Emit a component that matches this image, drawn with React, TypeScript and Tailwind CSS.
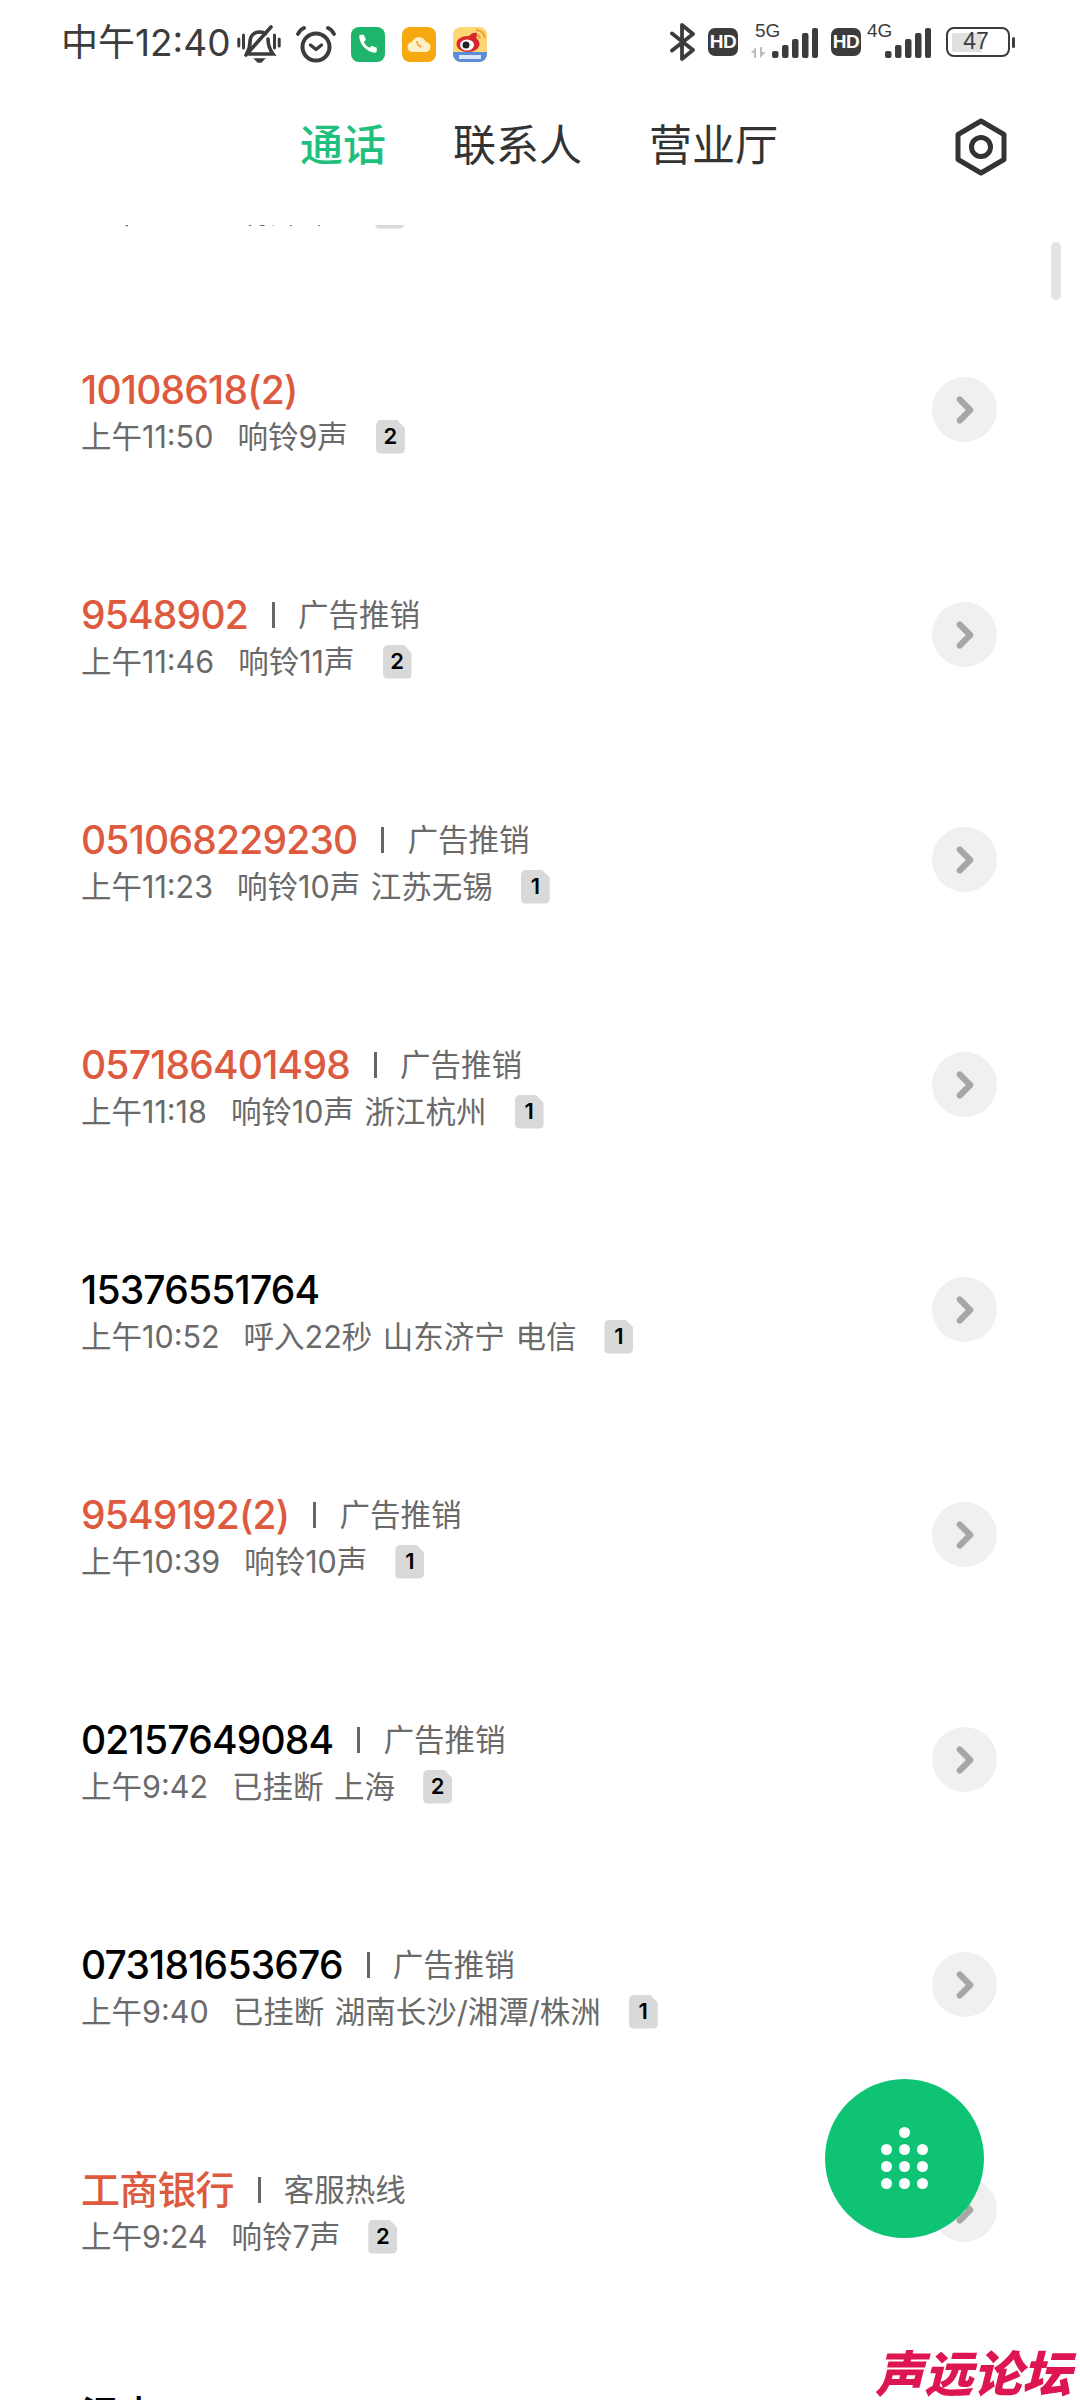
import React from "react";
import { ChevronRight } from "lucide-react";

type Call = {
  name: string;
  missed?: boolean;
  tag?: string;
  time: string;
  info: string;
  sim: string;
};

const calls: Call[] = [
  { name: "10108618(2)", missed: true, time: "上午11:50", info: "响铃9声", sim: "2" },
  { name: "9548902", missed: true, tag: "广告推销", time: "上午11:46", info: "响铃11声", sim: "2" },
  { name: "051068229230", missed: true, tag: "广告推销", time: "上午11:23", info: "响铃10声 江苏无锡", sim: "1" },
  { name: "057186401498", missed: true, tag: "广告推销", time: "上午11:18", info: "响铃10声 浙江杭州", sim: "1" },
  { name: "15376551764", time: "上午10:52", info: "呼入22秒 山东济宁 电信", sim: "1" },
  { name: "9549192(2)", missed: true, tag: "广告推销", time: "上午10:39", info: "响铃10声", sim: "1" },
  { name: "02157649084", tag: "广告推销", time: "上午9:42", info: "已挂断 上海", sim: "2" },
  { name: "073181653676", tag: "广告推销", time: "上午9:40", info: "已挂断 湖南长沙/湘潭/株洲", sim: "1" },
  { name: "工商银行", missed: true, tag: "客服热线", time: "上午9:24", info: "响铃7声", sim: "2" },
];

const dots = [0, 1, 0, 1, 1, 1, 1, 1, 1, 1, 1, 1];

const Signal = () => (
  <svg width="46" height="30" viewBox="0 0 46 30" fill="#3c3c3c">
    <rect x="0" y="23" width="6.500" height="7" rx="2" />
    <rect x="10" y="17" width="6.500" height="13" rx="2" />
    <rect x="20" y="11" width="6.500" height="19" rx="2" />
    <rect x="30" y="5" width="6.500" height="25" rx="2" />
    <rect x="40" y="0" width="6" height="30" rx="2" />
  </svg>
);

const HdBadge = () => (
  <span className="flex h-[28px] w-[30px] items-center justify-center rounded-[7px] bg-[#3c3c3c] font-['Liberation_Sans',sans-serif] text-[19px] font-bold tracking-[-0.5px] text-white">
    HD
  </span>
);

const StatusBar = () => (
  <div className="flex h-[70px] items-start justify-between pt-[24px] pl-[61px] pr-[65px] text-[#3c3c3c]">
    <div className="flex items-center">
      <span className="mt-[-2px] w-[166px] whitespace-nowrap text-[37px] leading-[38px]">中午12:40</span>
      <svg className="ml-[10px]" width="44" height="40" viewBox="0 0 44 40" fill="none" stroke="#3c3c3c" strokeWidth="3.600" strokeLinecap="round">
        <path d="M10 29c2-3 3-6 3-11 0-6 4-10 10-10 2 0 4 .5 5.500 1.500" />
        <path d="M31 15c0 7 2 11 5 15H12" />
        <path d="M9 31 34 3" />
        <path d="M1.800 15v7M6.500 11v13M37.500 11v13M42.200 15v7" strokeWidth="3" />
        <path d="M18 35h9l-3 3h-3z" fill="#3c3c3c" strokeWidth="1.500" />
      </svg>
      <svg className="ml-[15px]" width="40" height="38" viewBox="0 0 40 38" fill="none" stroke="#3c3c3c" strokeLinecap="round" strokeLinejoin="round">
        <circle cx="20" cy="22" r="13.500" strokeWidth="4" />
        <path d="M14.500 20 20 24.500l5.500-4.500" strokeWidth="3.400" />
        <path d="M2 9c1-2 3-5 6-6M38 9c-1-2-3-5-6-6" strokeWidth="3.800" />
      </svg>
      <span className="ml-[15px] flex h-[35px] w-[34px] items-center justify-center rounded-[8px] bg-[#1fb46b]">
        <svg width="20" height="20" viewBox="0 0 24 24" fill="#fff">
          <path d="M3 1h4l2.500 6-2.500 2.500c1.500 3 4 5.500 7 7l2.500-2.500 6 2.500v4c0 1-.8 2-2 2C11 22 2 13 1.500 3 1.500 2 2 1 3 1z" />
        </svg>
      </span>
      <span className="ml-[17px] flex h-[35px] w-[34px] items-center justify-center rounded-[8px] bg-[#f6a90f]">
        <svg width="24" height="18" viewBox="0 0 24 18" fill="#fff0c8">
          <path d="M6 17a5 5 0 0 1-1-10 7.500 7.500 0 0 1 14 0 5 5 0 0 1-1 10z" />
          <path d="M10 6c0 3 2 5 4 6" stroke="#e8a030" strokeWidth="1.500" fill="none" />
        </svg>
      </span>
      <span className="ml-[17px] block h-[35px] w-[34px] overflow-hidden rounded-[8px] bg-[#fbd873]">
        <svg width="34" height="35" viewBox="0 0 34 35">
          <rect y="25" width="34" height="10" fill="#5b8bdc" />
          <path d="M23 3a9 9 0 0 1 9 8" stroke="#f29a3a" strokeWidth="2" fill="none" />
          <path d="M23 8a4.500 4.500 0 0 1 4 4" stroke="#f29a3a" strokeWidth="2" fill="none" />
          <ellipse cx="15" cy="17" rx="11.500" ry="8" fill="#d9272e" />
          <path d="M15 10c3-4 6-5 9-4l-1 9z" fill="#d9272e" />
          <ellipse cx="14" cy="18" rx="7" ry="5.500" fill="#fff" />
          <circle cx="13" cy="18" r="3.500" fill="#222" />
          <rect x="6" y="28" width="22" height="4" fill="#fff" opacity=".8" />
        </svg>
      </span>
    </div>
    <div className="mt-[-1px] flex items-center">
      <svg width="25" height="38" viewBox="0 0 25 38" fill="none" stroke="#3c3c3c" strokeWidth="3.800" strokeLinejoin="round" strokeLinecap="round">
        <path d="M2 10.500 23 27 12 36V2l11 9L2 27.500" />
      </svg>
      <span className="ml-[13px]"><HdBadge /></span>
      <div className="relative ml-[10px] h-[38px] w-[70px]">
        <span className="absolute left-[7px] top-[-3px] font-['Liberation_Sans',sans-serif] text-[19px] leading-[22px]">5G</span>
        <svg className="absolute left-[3px] bottom-[3px]" width="16" height="11" viewBox="0 0 16 11" fill="#bdbdbd">
          <path d="M5 0v11H3V6H0zM9 11V0h2v5h4z" />
        </svg>
        <span className="absolute right-0 top-[5px]"><Signal /></span>
      </div>
      <span className="ml-[13px]"><HdBadge /></span>
      <div className="relative ml-[6px] h-[38px] w-[64px]">
        <span className="absolute left-0 top-[-3px] font-['Liberation_Sans',sans-serif] text-[19px] leading-[22px]">4G</span>
        <span className="absolute right-0 top-[5px]"><Signal /></span>
      </div>
      <div className="ml-[15px] flex items-center">
        <div className="relative flex h-[30px] w-[64px] items-center rounded-[8px] border-[2.500px] border-[#3c3c3c] pl-[4px]">
          <span className="h-[19px] w-[30px] rounded-[2px] bg-[#e0e0e0]" />
          <span className="absolute inset-0 pr-[4px] text-center font-['Liberation_Sans',sans-serif] text-[23px] leading-[25px]">47</span>
        </div>
        <span className="ml-[2px] h-[11px] w-[3px] rounded-[2px] bg-[#3c3c3c]" />
      </div>
    </div>
  </div>
);

const TopTabs = () => (
  <div className="relative flex h-[155px] items-start pl-[300px] pt-[52px] text-[#333333]">
    <span className="text-[43px] font-medium leading-[46px] text-[#1fbf7e]">通话</span>
    <span className="ml-[67px] text-[43px] leading-[46px]">联系人</span>
    <span className="ml-[67px] text-[43px] leading-[46px]">营业厅</span>
    <svg className="absolute left-[951px] top-[47px]" width="60" height="60" viewBox="0 0 60 60" fill="none" stroke="#333333" strokeWidth="5" strokeLinejoin="round">
      <path d="M30 4 53 17.500V42.500L30 56 7 42.500V17.500Z" />
      <circle cx="30" cy="30" r="9.500" />
    </svg>
  </div>
);

const CallRow = ({ call }: { call: Call }) => (
  <div className="flex h-[225px] items-center justify-between pl-[81px] pr-[83px]">
    <div className="mt-[2px] flex flex-col">
      <div className="flex h-[50px] items-center">
        <span className={`text-[39px] font-medium leading-[50px] tracking-[-0.8px] ${call.missed ? "text-[#dd5a3f]" : "text-black"}`}>
          {call.name}
        </span>
        {call.tag && (
          <>
            <span className="ml-[24px] h-[26px] w-[3px] bg-[#666666]" />
            <span className="ml-[23px] text-[30.500px] leading-[40px] text-[#6a6a6a]">{call.tag}</span>
          </>
        )}
      </div>
      <div className="mt-[2px] flex h-[40px] items-center text-[30.500px] text-[#6a6a6a]">
        <span>{call.time}</span>
        <span className="ml-[24px] [word-spacing:2px]">{call.info}</span>
        <span
          className="ml-[28px] flex h-[34px] w-[29px] items-center justify-center rounded-[5px] bg-[#d9d9d9] text-[22px] font-semibold text-black"
          style={{ clipPath: "polygon(0 0, 72% 0, 100% 24%, 100% 100%, 0 100%)" }}
        >
          {call.sim}
        </span>
      </div>
    </div>
    <span className="flex h-[65px] w-[65px] items-center justify-center rounded-full bg-[#f0f0f0]">
      <ChevronRight size={42} strokeWidth={3.5} color="#a6a6a6" />
    </span>
  </div>
);

export default function App() {
  return (
    <div className="relative flex h-[2400px] w-[1080px] flex-col overflow-hidden bg-white font-['Inter','Noto_Sans_CJK_SC',sans-serif]">
      <StatusBar />
      <TopTabs />
      <div className="flex-1 overflow-hidden">
        <div className="mt-[-153px]">
          <CallRow call={{ name: "10086", time: "上午11:52", info: "响铃8声", sim: "2" }} />
          {calls.map((call) => (
            <CallRow key={call.name} call={call} />
          ))}
          <CallRow call={{ name: "温大", time: "上午9:10", info: "已接听", sim: "1" }} />
        </div>
      </div>

      {/* scrollbar */}
      <div className="absolute left-[1051px] top-[242px] h-[58px] w-[10px] rounded-full bg-[#e4e4e4]" />

      {/* dial pad button */}
      <div className="absolute left-[825px] top-[2079px] flex h-[159px] w-[159px] items-center justify-center rounded-full bg-[#0fc375]">
        <div className="grid grid-cols-3 gap-x-[6.500px] gap-y-[5.500px] pb-[1px]">
          {dots.map((on, i) => (
            <span key={i} className={`h-[11.500px] w-[11.500px] rounded-full ${on ? "bg-white" : ""}`} />
          ))}
        </div>
      </div>

      {/* watermark */}
      <span className="absolute left-[875px] top-[2346px] font-['Noto_Sans_CJK_SC',sans-serif] text-[49px] font-black italic leading-[50px] text-[#dd1551]">
        声远论坛
      </span>
    </div>
  );
}
